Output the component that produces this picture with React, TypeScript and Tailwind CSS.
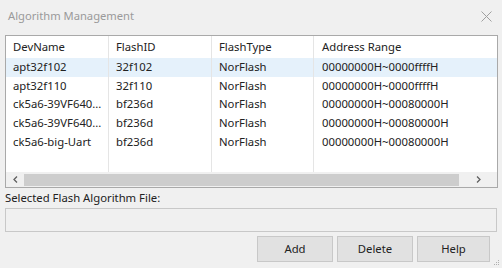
const rows = [
  { dev: "apt32f102", id: "32f102", type: "NorFlash", range: "00000000H~0000ffffH" },
  { dev: "apt32f110", id: "32f110", type: "NorFlash", range: "00000000H~0000ffffH" },
  { dev: "ck5a6-39VF640...", id: "bf236d", type: "NorFlash", range: "00000000H~00080000H" },
  { dev: "ck5a6-39VF640...", id: "bf236d", type: "NorFlash", range: "00000000H~00080000H" },
  { dev: "ck5a6-big-Uart", id: "bf236d", type: "NorFlash", range: "00000000H~00080000H" },
];

const Cell = ({ children, last }: { children: React.ReactNode; last?: boolean }) => (
  <div
    className={
      last
        ? "flex-1 pl-[7px] whitespace-nowrap overflow-hidden"
        : "w-[103px] shrink-0 pl-[7px] whitespace-nowrap overflow-hidden"
    }
  >
    {children}
  </div>
);

export default function App() {
  return (
    <div className="w-[502px] h-[268px] bg-[#f0f0f0] flex flex-col text-[11.3px] text-[#222] font-['Noto_Sans',sans-serif] relative">
      {/* title bar */}
      <div className="h-[35px] flex items-center justify-between pl-[8px] pr-[10px] pb-[3px]">
        <span className="text-[11.2px] text-[#9a9a9a]">Algorithm Management</span>
        <svg width="11" height="11" viewBox="0 0 11 11">
          <path d="M0.5 0.5 L10.5 10.5 M10.5 0.5 L0.5 10.5" stroke="#a0a0a0" strokeWidth="1" />
        </svg>
      </div>

      {/* list */}
      <div className="mx-[5px] mr-[4px] h-[153px] border border-[#a9a9a9] bg-white flex flex-col relative">
        <div className="absolute top-0 bottom-[15px] left-[102px] w-px bg-[#e5e5e5]" />
        <div className="absolute top-0 bottom-[15px] left-[205px] w-px bg-[#e5e5e5]" />
        <div className="absolute top-0 bottom-[15px] left-[307px] w-px bg-[#e5e5e5]" />
        <div className="h-[22px] flex items-center">
          <Cell>DevName</Cell>
          <Cell>FlashID</Cell>
          <Cell>FlashType</Cell>
          <Cell last>Address Range</Cell>
        </div>
        {rows.map((r, i) => (
          <div
            key={i}
            className={
              i === 0
                ? "h-[18.7px] flex items-center bg-[#e5f1fb]"
                : "h-[18.7px] flex items-center"
            }
          >
            <Cell>{r.dev}</Cell>
            <Cell>{r.id}</Cell>
            <Cell>{r.type}</Cell>
            <Cell last>{r.range}</Cell>
          </div>
        ))}
        <div className="flex-1" />
        {/* horizontal scrollbar */}
        <div className="h-[15px] bg-[#f0f0f0] flex items-center">
          <div className="w-[18px] flex justify-center">
            <svg width="5" height="7" viewBox="0 0 5 7">
              <path d="M4 0.5 L1 3.5 L4 6.5" stroke="#606060" strokeWidth="1.3" fill="none" />
            </svg>
          </div>
          <div className="w-[435px] h-[12px] bg-[#cdcdcd]" />
          <div className="flex-1 flex justify-center">
            <svg width="5" height="7" viewBox="0 0 5 7">
              <path d="M1 0.5 L4 3.5 L1 6.5" stroke="#606060" strokeWidth="1.3" fill="none" />
            </svg>
          </div>
        </div>
      </div>

      {/* selected file */}
      <div className="h-[20px] pl-[5px] flex items-center">Selected Flash Algorithm File:</div>
      <div className="mx-[5px] h-[24px] border border-[#c8c8c8] bg-[#f0f0f0]" />

      {/* buttons */}
      <div className="flex justify-end gap-[4px] pr-[12px] mt-[4px]">
        <button className="w-[76px] h-[26px] border border-[#c8c8c8] bg-[#e1e1e1]">Add</button>
        <button className="w-[76px] h-[26px] border border-[#c8c8c8] bg-[#e1e1e1]">Delete</button>
        <button className="w-[73px] h-[26px] border border-[#c8c8c8] bg-[#e1e1e1]">Help</button>
      </div>

      {/* resize grip */}
      <div className="absolute right-[3px] bottom-[3px] grid grid-cols-3 gap-[1px]">
        <span className="w-px h-px" />
        <span className="w-px h-px" />
        <span className="w-px h-px bg-[#b0b0b0]" />
        <span className="w-px h-px" />
        <span className="w-px h-px bg-[#b0b0b0]" />
        <span className="w-px h-px bg-[#b0b0b0]" />
        <span className="w-px h-px bg-[#b0b0b0]" />
        <span className="w-px h-px bg-[#b0b0b0]" />
        <span className="w-px h-px bg-[#b0b0b0]" />
      </div>
    </div>
  );
}
